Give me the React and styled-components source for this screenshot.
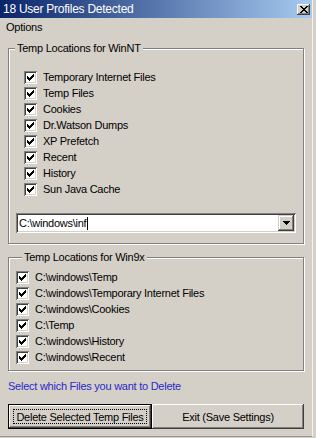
import styled, { createGlobalStyle } from 'styled-components'

const GlobalStyle = createGlobalStyle`
  body {
    margin: 0;
    background: #d4d0c8;
    font-family: 'Liberation Sans', Arial, sans-serif;
    font-size: 11px;
    letter-spacing: -0.25px;
    color: #000;
  }
`

const Window = styled.div`
  width: 312px;
  height: 436px;
  background: #d4d0c8;
  border-right: 1px solid #f4f3ef;
  border-bottom: 1px solid #9a968f;
  display: flex;
  flex-direction: column;
`

const TitleBar = styled.div`
  height: 18px;
  flex: none;
  display: flex;
  align-items: center;
  justify-content: space-between;
  padding: 0 2px 0 3px;
  background: linear-gradient(to right, #0a246a, #a6caf0);
  color: #fff;
  font-size: 12px;
`

const CloseButton = styled.span`
  width: 13px;
  height: 11px;
  display: flex;
  align-items: center;
  justify-content: center;
  background: #d4d0c8;
  box-shadow: inset -1px -1px #404040, inset 1px 1px #fff,
    inset -2px -2px #808080;
`

const MenuBar = styled.div`
  height: 18px;
  line-height: 18px;
  padding-left: 6px;
  flex: none;
`

const Body = styled.div`
  padding: 6px 8px 0 8px;
  display: flex;
  flex-direction: column;
`

const Group = styled.fieldset`
  margin: ${(p) => p.$top || 0}px 0 0 0;
  padding: ${(p) => p.$pad};
  min-width: 0;
  border: 1px solid #808080;
  box-shadow: inset 1px 1px #fff, 1px 1px #fff;
`

const Legend = styled.legend`
  margin-left: 6px;
  padding: 0 2px;
  line-height: 13px;
  background: #d4d0c8;
`

const Row = styled.label`
  height: 16px;
  display: flex;
  align-items: center;
  gap: ${(p) => p.$gap}px;
`

const Box = styled.span`
  width: 13px;
  height: 13px;
  flex: none;
  background: #fff;
  box-shadow: inset 1px 1px #808080, inset -1px -1px #fff,
    inset 2px 2px #404040, inset -2px -2px #d4d0c8;
  display: block;
`

const Combo = styled.div`
  margin: 16px 7px 0 7px;
  height: 20px;
  box-sizing: border-box;
  background: #fff;
  box-shadow: inset 1px 1px #808080, inset -1px -1px #fff,
    inset 2px 2px #404040, inset -2px -2px #d4d0c8;
  padding: 2px;
  display: flex;
  align-items: center;
`

const ComboText = styled.span`
  flex: 1;
  padding-left: 1px;
  display: flex;
  align-items: center;
`

const Caret = styled.span`
  width: 1px;
  height: 13px;
  background: #000;
  margin-left: 1px;
`

const DropButton = styled.span`
  width: 16px;
  height: 16px;
  background: #d4d0c8;
  box-shadow: inset -1px -1px #404040, inset 1px 1px #d4d0c8,
    inset -2px -2px #808080, inset 2px 2px #fff;
  display: flex;
  align-items: center;
  justify-content: center;
`

const Hint = styled.div`
  margin-top: 9px;
  line-height: 13px;
  color: #2929c8;
`

const ButtonRow = styled.div`
  margin-top: 11px;
  display: flex;
`

const Button = styled.button`
  width: ${(p) => p.$w}px;
  height: 25px;
  margin: 0;
  padding: 0;
  font: inherit;
  letter-spacing: inherit;
  color: #000;
  background: #d4d0c8;
  border: ${(p) => (p.$default ? '1px solid #000' : 'none')};
  box-shadow: inset -1px -1px #404040, inset 1px 1px #fff,
    inset -2px -2px #808080, inset 2px 2px #d4d0c8;
  position: relative;
  display: flex;
  align-items: center;
  justify-content: center;
`

const Focus = styled.span`
  position: absolute;
  inset: 4px;
  border: 1px dotted #000;
`

const Check = () => (
  <Box>
    <svg width="13" height="13" viewBox="0 0 13 13" shapeRendering="crispEdges">
      <path
        d="M3 5h1v3H3zM4 6h1v3H4zM5 7h1v3H5zM6 6h1v3H6zM7 5h1v3H7zM8 4h1v3H8zM9 3h1v3H9z"
        fill="#000"
      />
    </svg>
  </Box>
)

const ntItems = [
  'Temporary Internet Files',
  'Temp Files',
  'Cookies',
  'Dr.Watson Dumps',
  'XP Prefetch',
  'Recent',
  'History',
  'Sun Java Cache',
]

const nineXItems = [
  'C:\\windows\\Temp',
  'C:\\windows\\Temporary Internet Files',
  'C:\\windows\\Cookies',
  'C:\\Temp',
  'C:\\windows\\History',
  'C:\\windows\\Recent',
]

export default function App() {
  return (
    <>
      <GlobalStyle />
      <Window>
        <TitleBar>
          <span>18 User Profiles Detected</span>
          <CloseButton>
            <svg width="8" height="7" viewBox="0 0 8 7" shapeRendering="crispEdges">
              <path
                d="M0 0h2v1H0zM6 0h2v1H6zM1 1h2v1H1zM5 1h2v1H5zM2 2h4v1H2zM3 3h2v1H3zM2 4h4v1H2zM1 5h2v1H1zM5 5h2v1H5zM0 6h2v1H0zM6 6h2v1H6z"
                fill="#000"
              />
            </svg>
          </CloseButton>
        </TitleBar>
        <MenuBar>Options</MenuBar>
        <Body>
          <Group $pad="14px 0 10px 0">
            <Legend>Temp Locations for WinNT</Legend>
            <div style={{ paddingLeft: 15 }}>
              {ntItems.map((t) => (
                <Row key={t} $gap={6}>
                  <Check />
                  <span>{t}</span>
                </Row>
              ))}
            </div>
            <Combo>
              <ComboText>
                C:\windows\inf
                <Caret />
              </ComboText>
              <DropButton>
                <svg width="7" height="4" viewBox="0 0 7 4" shapeRendering="crispEdges">
                  <path d="M0 0h7v1H0zM1 1h5v1H1zM2 2h3v1H2zM3 3h1v1H3z" fill="#000" />
                </svg>
              </DropButton>
            </Combo>
          </Group>
          <Group $top={7} $pad="5px 0 5px 7px">
            <Legend>Temp Locations for Win9x</Legend>
            {nineXItems.map((t) => (
              <Row key={t} $gap={6}>
                <Check />
                <span>{t}</span>
              </Row>
            ))}
          </Group>
          <Hint>Select which Files you want to Delete</Hint>
          <ButtonRow>
            <Button $w={145} $default>
              <Focus />
              Delete Selected Temp Files
            </Button>
            <Button $w={153}>Exit (Save Settings)</Button>
          </ButtonRow>
        </Body>
      </Window>
    </>
  )
}
